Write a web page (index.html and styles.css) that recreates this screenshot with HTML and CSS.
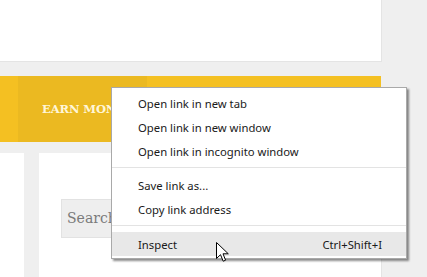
FILE: index.html
```html
<!DOCTYPE html>
<html lang="en">
<head>
    <meta charset="UTF-8">
    <meta name="viewport" content="width=device-width, initial-scale=1.0">
    <title>Earn Money</title>
    <link rel="stylesheet" href="styles.css">
</head>
<body>
    <div class="page">
        <div class="top-card"></div>

        <nav class="nav-bar">
            <div class="nav-start"></div>
            <a class="nav-item active" href="#">EARN MONEY</a>
        </nav>

        <div class="content">
            <div class="side-card"></div>
            <div class="main-card">
                <div class="search-box">Search</div>
            </div>
        </div>
    </div>

    <div class="context-menu">
        <div class="menu-item">Open link in new tab</div>
        <div class="menu-item">Open link in new window</div>
        <div class="menu-item">Open link in incognito window</div>
        <div class="menu-sep"></div>
        <div class="menu-item">Save link as...</div>
        <div class="menu-item">Copy link address</div>
        <div class="menu-sep"></div>
        <div class="menu-item hover">
            <span>Inspect</span>
            <span class="shortcut">Ctrl+Shift+I</span>
        </div>
    </div>

    <svg class="cursor" width="13" height="21" viewBox="0 0 13 21">
        <path d="M0.5 0.5 L0.5 16.5 L4.5 12.7 L7.2 19.2 L9.6 18.2 L7 11.8 L12.3 11.8 Z" fill="#fff" stroke="#000" stroke-width="1" stroke-linejoin="miter"/>
    </svg>
</body>
</html>
```

FILE: styles.css
```css
* {
    margin: 0;
    padding: 0;
    box-sizing: border-box;
}

body {
    background: #efefef;
    font-family: "Noto Sans", sans-serif;
    width: 427px;
    height: 277px;
    overflow: hidden;
    position: relative;
}

.page {
    width: 382px;
}

.top-card {
    height: 62px;
    background: #fff;
    border-bottom: 1px solid #e4e4e4;
    border-right: 1px solid #e4e4e4;
}

.nav-bar {
    margin-top: 14px;
    height: 66px;
    width: 381px;
    background: #f4c022;
    display: flex;
}

.nav-start {
    width: 18px;
}

.nav-item {
    width: 129px;
    background: #ebb921;
    color: #fff6d8;
    text-decoration: none;
    font-family: "DejaVu Serif", serif;
    font-weight: bold;
    font-size: 11.5px;
    display: flex;
    align-items: center;
    padding-left: 24px;
    white-space: nowrap;
    overflow: hidden;
    letter-spacing: -0.1px;
}

.content {
    margin-top: 11px;
    display: flex;
    gap: 15px;
    height: 130px;
}

.side-card {
    width: 24px;
    background: #fff;
}

.main-card {
    flex: 1;
    background: #fff;
    border-right: 1px solid #e4e4e4;
    padding: 46px 0 0 22px;
}

.search-box {
    width: 200px;
    height: 39px;
    background: #eeeeee;
    border: 1px solid #e2e2e2;
    color: #7a7a7a;
    font-family: "DejaVu Serif", serif;
    font-size: 14px;
    line-height: 37px;
    padding-left: 5px;
}

.context-menu {
    position: absolute;
    left: 111px;
    top: 87px;
    width: 296px;
    height: 172px;
    background: #fff;
    border: 1px solid #a9a9a9;
    box-shadow: 2px 2px 2px rgba(0, 0, 0, 0.45);
    padding: 3px 0 2px;
    font-size: 11.3px;
    color: #1a1a1a;
}

.menu-item {
    height: 24px;
    display: flex;
    align-items: center;
    justify-content: space-between;
    padding: 0 24px 0 26px;
}

.menu-item.hover {
    background: #e8e8e8;
    margin-top: 1px;
}

.menu-sep {
    height: 10px;
    position: relative;
}

.menu-sep::after {
    content: "";
    position: absolute;
    left: 0;
    right: 0;
    top: 4px;
    border-top: 1px solid #e3e3e3;
}

.cursor {
    position: absolute;
    left: 216px;
    top: 242px;
}
```
